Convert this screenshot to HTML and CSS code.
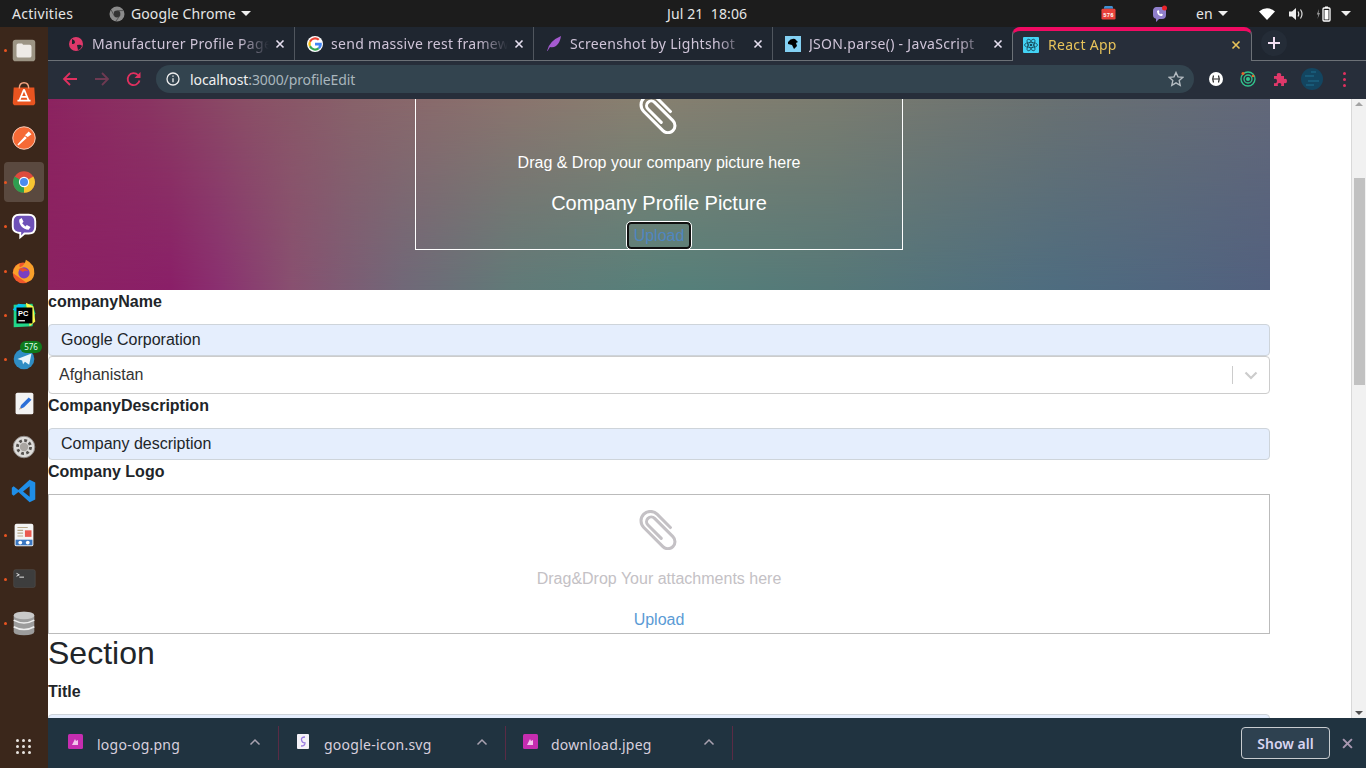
FILE: index.html
```html
<!DOCTYPE html>
<html lang="en">
<head>
<meta charset="UTF-8">
<meta name="viewport" content="width=device-width, initial-scale=1.0">
<title>React App</title>
<link rel="stylesheet" href="styles.css">
</head>
<body>
<!-- gnome top bar -->
<header class="topbar">
  <span class="activities">Activities</span>
  <span class="app-menu">
    <svg class="app-icon" viewBox="0 0 16 16"><circle cx="8" cy="8" r="7.500" fill="#8b8b8b"/><circle cx="8" cy="8" r="3.400" fill="#333"/><path d="M8 4.600h6M5 9.500L2.200 4M10.800 9.800L7 15" stroke="#555" stroke-width="1"/></svg>
    <span>Google Chrome</span><i class="caret"></i>
  </span>
  <span class="clock">Jul 21&nbsp;&nbsp;18:06</span>
  <div class="tray">
    <svg class="tray-cal" viewBox="0 0 16 16"><path d="M3 3a5 5 0 0 1 10 0z" fill="#3f8fd0"/><rect x="0.500" y="3" width="15" height="11.500" rx="1.500" fill="#e8413a"/><text x="8" y="11.500" text-anchor="middle" class="tray-cal-text">576</text></svg>
    <svg class="tray-viber" viewBox="0 0 18 18"><path d="M5 2h6a4 4 0 0 1 4 4v4a4 4 0 0 1-4 4H8l-3 3v-3.200A4 4 0 0 1 2 10V6a4 4 0 0 1 3-4z" fill="#8f7fcb"/><path d="M6 6c0 3 2 5 5 5l1-1.500-2-1-.8.700-1.400-1.400.7-.8-1-2z" fill="#fff"/><circle cx="13.500" cy="3" r="2.500" fill="#e8232a"/></svg>
    <span class="lang">en <i class="caret"></i></span>
    <svg class="tray-wifi" viewBox="0 0 16 12"><path d="M0 3.500Q8-3 16 3.500L8 12z" fill="#fff"/></svg>
    <svg class="tray-sound" viewBox="0 0 16 14"><path d="M1 4.500h3L8 1v12L4 9.500H1z" fill="#eee"/><path d="M10 4.500q1.500 2.500 0 5M12.500 2.500q3 4.500 0 9" stroke="#ddd" stroke-width="1.200" fill="none"/></svg>
    <svg class="tray-batt" viewBox="0 0 16 16"><path d="M3 3L0.800 8.500h1.500L1.500 13 4 7H2.600z" fill="#999"/><rect x="7" y="2" width="7" height="13" rx="1" fill="none" stroke="#fff" stroke-width="1.300"/><rect x="9" y="0.500" width="3" height="1.500" fill="#fff"/><rect x="8.500" y="4" width="4" height="9.500" fill="#fff"/></svg>
    <i class="caret"></i>
  </div>
</header>

<div class="desktop">
  <!-- ubuntu dock -->
  <nav class="dock">
    <div class="dock-item running"><svg viewBox="0 0 32 32"><rect x="4" y="5" width="24" height="23" rx="3" fill="#9c9484"/><path d="M8 11q0-2 2-2h4l1 1.500h7q2 0 2 2V22q0 2-2 2H10q-2 0-2-2z" fill="#eeeae6"/></svg></div>
    <div class="dock-item"><svg viewBox="0 0 32 32"><path d="M5 9h22l1 16q0 3-3 3H7q-3 0-3-3z" fill="#e95420"/><path d="M11 10q0-6 5-6t5 6" stroke="#f5a481" stroke-width="1.500" fill="none"/><path d="M16 11l-5 12M16 11l5 12M12 19h8M9 23h14" stroke="#fff" stroke-width="1.800" fill="none"/></svg></div>
    <div class="dock-item"><svg viewBox="0 0 32 32"><circle cx="16" cy="16" r="12" fill="#f56a36" stroke="#f9d3c2" stroke-width="1"/><path d="M9 23l8-9 2 2-9 8zM17 13l4-4 3 3-4 3z" fill="#fff"/></svg></div>
    <div class="dock-item running active"><svg viewBox="0 0 32 32"><circle cx="16" cy="16" r="11.500" fill="#dd4b3e"/><path d="M16 16L26 10.200A11.500 11.500 0 0 1 16 27.500z" fill="#f6c632"/><path d="M16 16L16 27.500A11.500 11.500 0 0 1 6 10.200z" fill="#2f9e50"/><circle cx="16" cy="16" r="5.500" fill="#fff"/><circle cx="16" cy="16" r="4.300" fill="#4a8cf0"/></svg></div>
    <div class="dock-item running"><svg viewBox="0 0 32 32"><path d="M11 3h10q8 0 8 8v6q0 8-8 8h-4l-6 5v-5.500Q3 23 3 17v-6q0-8 8-8z" fill="#fff"/><path d="M11 5h10q6 0 6 6v6q0 6-6 6h-5l-3 3v-3.500Q5 22 5 17v-6q0-6 6-6z" fill="#6e51b8"/><path d="M11 9c-1 5 4 11 10 11l2-3-4-2-1.500 1.500-3.500-3.500 1.500-1.500-2-4z" fill="#fff"/></svg></div>
    <div class="dock-item running"><svg viewBox="0 0 32 32"><circle cx="15" cy="18" r="11" fill="#f0582c"/><path d="M4 18Q6 9 12 8q-2 3 0 4 5-2 6-8 10 5 9 15-1 8-9 9z" fill="#f9a02b"/><circle cx="16" cy="18" r="6" fill="#7a3fc0"/><path d="M10 14q6-3 11 2-5-1-6 1z" fill="#e8502d"/></svg></div>
    <div class="dock-item running"><svg viewBox="0 0 32 32"><path d="M5 5l20-1 3 10-3 14-20 1z" fill="#21d789"/><path d="M18 3l8 4 2 16-6 5z" fill="#fcf84a"/><path d="M4 10l6-6 8 1-9 8z" fill="#07c3f2"/><rect x="8" y="8" width="17" height="17" fill="#000"/><text x="9.500" y="17" class="pc-text">PC</text><rect x="10" y="21.500" width="7" height="1.300" fill="#fff"/></svg></div>
    <div class="dock-item running"><svg viewBox="0 0 32 32"><circle cx="16" cy="16" r="11" fill="#2f8dc4"/><path d="M9 16l15-6-2.500 12-4.500-3-2 2.500-1-4z" fill="#e9f4fb"/></svg><span class="dock-badge">576</span></div>
    <div class="dock-item"><svg viewBox="0 0 32 32"><rect x="7" y="5" width="19" height="23" rx="2" fill="#f3f3f3"/><path d="M11 23l2-5 8-8 3 2.500-8 8z" fill="#2c6fd8"/><path d="M11 23l1-2.500 1.500 1.300z" fill="#e8b070"/></svg></div>
    <div class="dock-item"><svg viewBox="0 0 32 32"><circle cx="16" cy="16" r="11.500" fill="#dedcda" stroke="#8d8986" stroke-width="1"/><circle cx="16" cy="16" r="7" fill="none" stroke="#55524f" stroke-width="3" stroke-dasharray="3 2.500"/><circle cx="16" cy="16" r="4.500" fill="#aaa6a2"/></svg></div>
    <div class="dock-item"><svg viewBox="0 0 32 32"><path d="M22 4l6 3v18l-6 3-12-11-5 4-2-1.500v-7L5 11l5 4zM22 11l-7 5.500 7 5.500z" fill="#1f8ee8" fill-rule="evenodd"/></svg></div>
    <div class="dock-item running"><svg viewBox="0 0 32 32"><rect x="6" y="4" width="20" height="24" rx="2" fill="#f4f4f4"/><path d="M9 8h11M9 11h6M9 14h6M9 17h6" stroke="#b9a98a" stroke-width="1.200"/><rect x="17" y="11" width="7" height="7" fill="#ea5a50"/><rect x="7" y="21" width="18" height="6" fill="#3a77c2"/><circle cx="12" cy="24" r="2" fill="#fff"/><circle cx="20" cy="24" r="2" fill="#fff"/></svg></div>
    <div class="dock-item running"><svg viewBox="0 0 32 32"><rect x="5" y="6" width="23" height="19" rx="2" fill="#3d3d3d" stroke="#555" stroke-width="0.500"/><path d="M8 10l3 1.500-3 1.500M11 14h5" stroke="#eee" stroke-width="1" fill="none"/></svg></div>
    <div class="dock-item running"><svg viewBox="0 0 32 32"><path d="M5 8q0-4 11-4t11 4v17q0 4-11 4T5 25z" fill="#9c9c9c"/><ellipse cx="16" cy="8" rx="11" ry="4" fill="#c9c9c9"/><path d="M5 13q11 6 22 0M5 20q11 6 22 0" stroke="#eee" stroke-width="1.600" fill="none"/></svg></div>
    <div class="dock-apps"><i></i><i></i><i></i><i></i><i></i><i></i><i></i><i></i><i></i></div>
  </nav>

  <div class="browser">
    <!-- tab strip -->
    <div class="tabstrip">
      <div class="tab">
        <svg class="favicon" viewBox="0 0 16 16"><circle cx="8" cy="8" r="7" fill="#e0386a"/><path d="M4 3q3 1 3 3T4 8zM9 9q4-1 5 1-1 3-4 4z" fill="#1f2630"/></svg>
        <span class="tab-title">Manufacturer Profile Page</span>
        <svg class="tab-close" viewBox="0 0 10 10"><path d="M1.500 1.500l7 7M8.500 1.500l-7 7"/></svg>
      </div>
      <div class="tab">
        <svg class="favicon" viewBox="0 0 16 16"><circle cx="8" cy="8" r="8" fill="#fff"/><path d="M8 3.500a4.500 4.500 0 0 1 3 1.100l1.600-1.600A7 7 0 0 0 2 5l1.900 1.500A4.500 4.500 0 0 1 8 3.500z" fill="#ea4335"/><path d="M3.900 6.500L2 5a7 7 0 0 0 0 6l1.900-1.500a4.500 4.500 0 0 1 0-3z" fill="#fbbc05"/><path d="M3.900 9.500L2 11a7 7 0 0 0 10.600 2l-1.800-1.400A4.500 4.500 0 0 1 3.900 9.500z" fill="#34a853"/><path d="M14.700 6.700H8v2.700h3.800a3 3 0 0 1-1 2.200l1.800 1.400a7 7 0 0 0 2.100-6.300z" fill="#4285f4"/></svg>
        <span class="tab-title">send massive rest framework</span>
        <svg class="tab-close" viewBox="0 0 10 10"><path d="M1.500 1.500l7 7M8.500 1.500l-7 7"/></svg>
      </div>
      <div class="tab">
        <svg class="favicon" viewBox="0 0 16 16"><path d="M1 15Q3 5 15 0q-1 7-5 10-3 2-6 1l-2.500 4z" fill="#a45ad0"/></svg>
        <span class="tab-title">Screenshot by Lightshot</span>
        <svg class="tab-close" viewBox="0 0 10 10"><path d="M1.500 1.500l7 7M8.500 1.500l-7 7"/></svg>
      </div>
      <div class="tab">
        <svg class="favicon" viewBox="0 0 16 16"><rect width="16" height="16" fill="#83d0f2"/><path d="M3 6q3-4 7-3l3 3-2 1 1 3-3 3-2-4-4-1z" fill="#000"/></svg>
        <span class="tab-title">JSON.parse() - JavaScript</span>
        <svg class="tab-close" viewBox="0 0 10 10"><path d="M1.500 1.500l7 7M8.500 1.500l-7 7"/></svg>
      </div>
      <div class="tab tab-active">
        <svg class="favicon" viewBox="0 0 16 16"><rect width="16" height="16" rx="1" fill="#43d3f5"/><g fill="none" stroke="#164a5c" stroke-width="0.800"><ellipse cx="8" cy="8" rx="6.500" ry="2.600"/><ellipse cx="8" cy="8" rx="6.500" ry="2.600" transform="rotate(60 8 8)"/><ellipse cx="8" cy="8" rx="6.500" ry="2.600" transform="rotate(120 8 8)"/></g><circle cx="8" cy="8" r="1.300" fill="#164a5c"/></svg>
        <span class="tab-title">React App</span>
        <svg class="tab-close" viewBox="0 0 10 10"><path d="M1.500 1.500l7 7M8.500 1.500l-7 7"/></svg>
      </div>
      <div class="new-tab"><svg viewBox="0 0 14 14"><path d="M7 1v12M1 7h12"/></svg></div>
    </div>

    <!-- toolbar -->
    <div class="toolbar">
      <svg class="nav-btn" viewBox="0 0 16 16"><path d="M15 8H2M8 2L2 8l6 6"/></svg>
      <svg class="nav-btn nav-off" viewBox="0 0 16 16"><path d="M1 8h13M8 2l6 6-6 6"/></svg>
      <svg class="nav-btn" viewBox="0 0 16 16"><path d="M13.500 9.500A6 6 0 1 1 12 4"/><path class="nav-fill" d="M14.500 1v6h-6z"/></svg>
      <div class="omnibox">
        <svg class="info-icon" viewBox="0 0 14 14"><circle cx="7" cy="7" r="6"/><path d="M7 6.200v4M7 3.500v1.300"/></svg>
        <span class="url"><b>localhost</b>:3000/profileEdit</span>
        <svg class="star" viewBox="0 0 16 16"><path d="M8 1.500l2 4.400 4.700.5-3.500 3.200 1 4.700L8 11.900l-4.200 2.400 1-4.700L1.300 6.400 6 5.900z"/></svg>
      </div>
      <div class="extensions">
        <svg viewBox="0 0 16 16"><circle cx="8" cy="8" r="7" fill="#fff"/><path d="M5.500 4.500q-1.500 3.500 0 7M10.500 4.500q1.500 3.500 0 7M5.500 8h5" stroke="#222" stroke-width="1.200" fill="none"/></svg>
        <svg viewBox="0 0 16 16"><circle cx="8" cy="8" r="7" fill="none" stroke="#32c48d" stroke-width="1.300"/><circle cx="8" cy="8" r="4" fill="none" stroke="#32c48d" stroke-width="1.300"/><circle cx="8" cy="8" r="2" fill="#32c48d"/><circle cx="3" cy="2.500" r="1.500" fill="#e8662a"/><circle cx="13" cy="5" r="1.300" fill="#e8662a"/></svg>
        <svg viewBox="0 0 16 16"><path d="M2 5h3q-1-3 2-3t2 3h3v3q3-1 3 2t-3 2v3H9q1-3-1.500-3T6 15H2v-3q3 1 3-2T2 8z" fill="#e0386a"/></svg>
        <svg class="avatar" viewBox="0 0 22 22"><circle cx="11" cy="11" r="11" fill="#134560"/><path d="M4 8h9M7 13h11M10 4h5M5 17h8" stroke="#185a78" stroke-width="2"/></svg>
        <span class="menu-dots"><i></i><i></i><i></i></span>
      </div>
    </div>

    <div class="viewport">
      <!-- page is scrolled down a bit, as in the shot -->
      <main class="page">
        <div class="page-inner">
          <section class="hero">
            <div class="hero-box">
              <svg class="clip clip-white" viewBox="2.500 3 34 34"><path transform="rotate(-45 20 20)" d="M28 25V9a8 8 0 0 0-16 0v23a6 6 0 0 0 12 0V10a4 4 0 0 0-8 0v16"/></svg>
              <p class="hero-hint">Drag &amp; Drop your company picture here</p>
              <p class="hero-title">Company Profile Picture</p>
              <button class="hero-upload">Upload</button>
            </div>
          </section>
          <label class="field-label">companyName</label>
          <div class="text-input">Google Corporation</div>
          <div class="select-box">
            <span>Afghanistan</span>
            <span class="select-arrow"><svg viewBox="0 0 20 20"><path d="M4.500 7.500L10 13l5.500-5.500"/></svg></span>
          </div>
          <label class="field-label">CompanyDescription</label>
          <div class="text-input">Company description</div>
          <label class="field-label">Company Logo</label>
          <div class="drop-box">
            <svg class="clip clip-grey" viewBox="2.500 3 34 34"><path transform="rotate(-45 20 20)" d="M28 25V9a8 8 0 0 0-16 0v23a6 6 0 0 0 12 0V10a4 4 0 0 0-8 0v16"/></svg>
            <p class="drop-hint">Drag&amp;Drop Your attachments here</p>
            <a class="drop-upload">Upload</a>
          </div>
          <h2 class="section-title">Section</h2>
          <label class="field-label">Title</label>
          <div class="text-input"></div>
        </div>
        <div class="scrollbar">
          <i class="arrow-up"></i>
          <div class="thumb"></div>
          <i class="arrow-down"></i>
        </div>
      </main>
    </div>

    <!-- downloads shelf -->
    <footer class="downloads">
      <div class="dl-item">
        <svg class="dl-icon" viewBox="0 0 15 15"><rect width="15" height="15" rx="1.500" fill="#c62db0"/><path d="M4 11l3-6 1 2 2-1v5z" fill="#f3c4ec"/></svg>
        <span class="dl-name">logo-og.png</span>
        <svg class="dl-chevron" viewBox="0 0 12 8"><path d="M1.500 6.500L6 2l4.500 4.500"/></svg>
      </div>
      <div class="dl-item">
        <svg class="dl-icon dl-icon-svg" viewBox="0 0 12 15"><rect width="12" height="15" rx="1" fill="#f4f2f8"/><path d="M8 3Q4 3 4.500 6T8 9q0 3-4 3" stroke="#9a7be0" stroke-width="1.300" fill="none"/></svg>
        <span class="dl-name">google-icon.svg</span>
        <svg class="dl-chevron" viewBox="0 0 12 8"><path d="M1.500 6.500L6 2l4.500 4.500"/></svg>
      </div>
      <div class="dl-item">
        <svg class="dl-icon" viewBox="0 0 15 15"><rect width="15" height="15" rx="1.500" fill="#c62db0"/><path d="M4 11l3-6 1 2 2-1v5z" fill="#f3c4ec"/></svg>
        <span class="dl-name">download.jpeg</span>
        <svg class="dl-chevron" viewBox="0 0 12 8"><path d="M1.500 6.500L6 2l4.500 4.500"/></svg>
      </div>
      <button class="show-all">Show all</button>
      <svg class="dl-close" viewBox="0 0 10 10"><path d="M1 1l8 8M9 1l-8 8"/></svg>
    </footer>
  </div>
</div>
</body>
</html>
```
FILE: styles.css
```css
* {
  box-sizing: border-box;
}
html, body {
  height: 100%;
}
body {
  margin: 0;
  overflow: hidden;
  display: flex;
  flex-direction: column;
  font-family: "Liberation Sans", Arial, sans-serif;
  font-size: 16px;
  color: #212529;
  background: #fff;
}
svg {
  display: block;
  flex: none;
}

/* top bar */
.topbar {
  height: 27px;
  flex: none;
  display: flex;
  align-items: center;
  background: #1c1c1c;
  color: #e6e6e6;
  font-family: "Noto Sans", sans-serif;
  font-size: 14px;
  letter-spacing: 0.1px;
}
.activities {
  margin-left: 12px;
  width: 97px;
  letter-spacing: 0.3px;
}
.app-menu {
  display: flex;
  align-items: center;
  width: 558px;
  white-space: nowrap;
}
.app-icon {
  width: 16px;
  height: 16px;
  margin-right: 6px;
}
.caret {
  display: inline-block;
  width: 0;
  height: 0;
  margin-left: 5px;
  border-left: 5px solid transparent;
  border-right: 5px solid transparent;
  border-top: 5px solid #eee;
}
.clock {
  width: 81px;
  white-space: nowrap;
}
.tray {
  margin-left: auto;
  display: flex;
  align-items: center;
  padding-right: 15px;
}
.tray > .caret {
  margin-left: 9px;
}
.tray-cal {
  width: 15px;
  height: 15px;
}
.tray-cal-text {
  font: bold 6px "Liberation Mono", monospace;
  fill: #fff;
}
.tray-viber {
  width: 18px;
  height: 18px;
  margin-left: 35px;
}
.lang {
  margin-left: 27px;
  display: flex;
  align-items: center;
  width: 63px;
}
.tray-wifi {
  width: 16px;
  height: 12px;
}
.tray-sound {
  width: 16px;
  height: 14px;
  margin-left: 13px;
}
.tray-batt {
  width: 16px;
  height: 16px;
  margin-left: 12px;
}

/* dock + browser */
.desktop {
  flex: 1;
  min-height: 0;
  display: flex;
}
.dock {
  width: 48px;
  flex: none;
  display: flex;
  flex-direction: column;
  padding-top: 1px;
  background: #3b271b;
}
.dock-item {
  position: relative;
  height: 44.100px;
  flex: none;
  display: flex;
  align-items: center;
  justify-content: center;
}
.dock-item svg {
  width: 30px;
  height: 30px;
}
.dock-item.active svg {
  width: 40px;
  height: 40px;
  padding: 5px;
  border-radius: 4px;
  background: rgba(255, 255, 255, 0.16);
}
.running::before {
  content: "";
  position: absolute;
  left: 4px;
  top: 50%;
  width: 3px;
  height: 3px;
  margin-top: -1px;
  border-radius: 50%;
  background: #e95420;
}
.dock-badge {
  position: absolute;
  left: 20px;
  top: 4px;
  width: 22px;
  height: 12px;
  border-radius: 6px;
  background: #0f7a1c;
  color: #dfe;
  font: 8px/12px "Noto Sans", sans-serif;
  text-align: center;
}
.pc-text {
  font: bold 8px "Liberation Sans", sans-serif;
  fill: #fff;
}
.dock-apps {
  margin-top: auto;
  margin-bottom: 14px;
  margin-left: 16px;
  width: 16px;
  display: grid;
  grid-template-columns: repeat(3, 3px);
  gap: 3px;
}
.dock-apps i {
  width: 3px;
  height: 3px;
  border-radius: 50%;
  background: #e8e4e0;
}
.browser {
  flex: 1;
  min-width: 0;
  display: flex;
  flex-direction: column;
}

/* tabs */
.tabstrip {
  height: 34px;
  flex: none;
  display: flex;
  padding-left: 8px;
  background: #1f2630;
  border-bottom: 1px solid #6c7177;
  font-family: "Noto Sans", sans-serif;
  font-size: 14px;
  letter-spacing: 0.3px;
}
.tab {
  width: 239px;
  height: 33px;
  display: flex;
  align-items: center;
  padding: 0 9px 0 12px;
  border-right: 1px solid #50565e;
  color: #cfc4d8;
}
.tab:nth-child(4) {
  border-right: none;
}
.tab-active {
  position: relative;
  width: 240px;
  height: 34px;
  padding: 0 10px 3px 10px;
  border: 1px solid #6c7177;
  border-top: 4px solid #f00b62;
  border-bottom: none;
  border-radius: 8px 8px 0 0;
  background: #272e3a;
  color: #e8c35a;
}
.favicon {
  width: 16px;
  height: 16px;
  margin-right: 8px;
}
.tab-active .favicon {
  margin-right: 9px;
}
.tab-title {
  flex: 1;
  min-width: 0;
  overflow: hidden;
  white-space: nowrap;
  -webkit-mask-image: linear-gradient(to left, transparent 0, #000 30px);
  mask-image: linear-gradient(to left, transparent 0, #000 30px);
}
.tab-close {
  width: 10px;
  height: 10px;
  margin-left: 6px;
}
.tab-close path {
  stroke: #e6dff0;
  stroke-width: 1.600;
  fill: none;
}
.tab-active .tab-close path {
  stroke: #e8c35a;
}
.new-tab {
  width: 26px;
  height: 26px;
  margin: 3px 0 0 9px;
  display: flex;
  align-items: center;
  justify-content: center;
  border-radius: 50%;
  background: #242c37;
}
.new-tab svg {
  width: 14px;
  height: 14px;
}
.new-tab path {
  stroke: #f2dff2;
  stroke-width: 2;
}

/* toolbar */
.toolbar {
  height: 38px;
  flex: none;
  display: flex;
  align-items: center;
  padding: 0 14px 2px;
  background: #272e3a;
  font-family: "Noto Sans", sans-serif;
}
.nav-btn {
  width: 16px;
  height: 16px;
  margin-right: 16px;
}
.nav-btn path {
  fill: none;
  stroke: #e0305f;
  stroke-width: 1.800;
}
.nav-btn .nav-fill {
  fill: #e0305f;
  stroke: none;
}
.nav-btn.nav-off path {
  stroke: #6e3a52;
}
.omnibox {
  width: 1038px;
  height: 28px;
  margin-left: -2px;
  display: flex;
  align-items: center;
  padding: 0 10px 0 10px;
  border-radius: 14px;
  background: #33444f;
  font-size: 14px;
  letter-spacing: -0.1px;
  color: #a9b6bd;
}
.info-icon {
  width: 14px;
  height: 14px;
  margin-right: 10px;
}
.info-icon circle, .info-icon path {
  fill: none;
  stroke: #eee;
  stroke-width: 1.300;
}
.url b {
  font-weight: 400;
  color: #f0f0f0;
}
.star {
  width: 16px;
  height: 16px;
  margin-left: auto;
}
.star path {
  fill: none;
  stroke: #b5bcc2;
  stroke-width: 1.400;
}
.extensions {
  display: flex;
  align-items: center;
  margin-left: 14px;
}
.extensions svg {
  width: 16px;
  height: 16px;
  margin-right: 16px;
}
.extensions .avatar {
  width: 22px;
  height: 22px;
  margin: 0 20px 0 -3px;
}
.menu-dots {
  display: flex;
  flex-direction: column;
  gap: 3px;
}
.menu-dots i {
  width: 3px;
  height: 3px;
  border-radius: 50%;
  background: #e0305f;
}

/* page */
.viewport {
  flex: 1;
  min-height: 0;
  overflow: hidden;
}
.page {
  height: 100%;
  display: flex;
}
.page-inner {
  width: 1222px;
  margin-top: -61px;
  flex: none;
}
/* top row of the colours is the background, bottom row fades in over it */
.hero {
  position: relative;
  height: 252px;
  padding-top: 40px;
  color: #fff;
  background: linear-gradient(90deg, #8c2360 0, #8a3462 8%, #8a4e66 16%, #88626a 25%, #8a746e 38%, #888070 48%, #7a7c70 64%, #687072 83%, #62687a 100%);
}
.hero::before {
  content: "";
  position: absolute;
  inset: 0;
  background: linear-gradient(90deg, #8c2262 0, #8a1f68 10%, #8a3070 14%, #885070 20%, #706878 29%, #607a78 38%, #55807a 51%, #557878 64%, #4e6c80 83%, #52607e 100%);
  -webkit-mask-image: linear-gradient(to bottom, transparent 61px, #000 252px);
  mask-image: linear-gradient(to bottom, transparent 61px, #000 252px);
}
.hero-box {
  position: relative;
  width: 488px;
  height: 172px;
  margin: 0 auto;
  padding-top: 15px;
  border: 1px solid #fff;
  display: flex;
  flex-direction: column;
  align-items: center;
}
.clip {
  width: 40px;
  height: 40px;
}
.clip path {
  fill: none;
  stroke-width: 2.600;
  stroke-linecap: round;
}
.clip-white path {
  stroke: #fff;
}
.clip-grey path {
  stroke: #c4c1c5;
}
.hero-hint {
  margin: 17px 0 15px;
  line-height: 24px;
}
.hero-title {
  margin: -2px 0 4px;
  font-size: 20px;
  line-height: 30px;
}
.hero-upload {
  width: 64px;
  height: 29px;
  padding: 1px 0 0;
  border: 2px solid #111;
  border-radius: 4px;
  outline: 1px solid #fff;
  background: transparent;
  color: #4f86c0;
  font: 16px "Liberation Sans", sans-serif;
}
.field-label {
  display: block;
  height: 24px;
  margin-bottom: 10px;
  font-weight: 700;
  line-height: 24px;
}
.text-input {
  height: 32px;
  padding: 0 12px;
  border: 1px solid #ced4da;
  border-radius: 4px;
  background: #e5eefd;
  line-height: 30px;
}
.select-box {
  height: 38px;
  display: flex;
  align-items: center;
  justify-content: space-between;
  padding-left: 10px;
  border: 1px solid #ccc;
  border-radius: 4px;
  color: #333;
}
.select-arrow {
  height: 18px;
  width: 37px;
  display: flex;
  align-items: center;
  justify-content: center;
  border-left: 1px solid #ccc;
}
.select-arrow svg {
  width: 20px;
  height: 20px;
}
.select-arrow path {
  fill: none;
  stroke: #ccc;
  stroke-width: 2.200;
}
.drop-box {
  height: 140px;
  padding-top: 15px;
  border: 1px solid #bbb;
  display: flex;
  flex-direction: column;
  align-items: center;
}
.drop-hint {
  margin: 17px 0 17px;
  line-height: 24px;
  color: #c4c1c5;
}
.drop-upload {
  line-height: 24px;
  color: #5b9bd5;
}
.section-title {
  margin: 0 0 8px;
  font-size: 32px;
  font-weight: 400;
  line-height: 38px;
}

/* scrollbar */
.scrollbar {
  position: relative;
  width: 15px;
  margin-left: auto;
  background: #f1f1f1;
  border-left: 1px solid #d8d8d8;
}
.thumb {
  position: absolute;
  left: 2px;
  top: 79px;
  width: 11px;
  height: 207px;
  background: #c1c1c1;
}
.arrow-up, .arrow-down {
  position: absolute;
  left: 3px;
  width: 0;
  height: 0;
  border-left: 4px solid transparent;
  border-right: 4px solid transparent;
}
.arrow-up {
  top: 3px;
  border-bottom: 4px solid #a3a3a3;
}
.arrow-down {
  bottom: 3px;
  border-top: 4px solid #505050;
}

/* downloads */
.downloads {
  height: 50px;
  flex: none;
  display: flex;
  align-items: center;
  background: #203340;
  font-family: "Noto Sans", sans-serif;
  font-size: 14px;
  letter-spacing: 0.25px;
  color: #d8d0de;
}
.dl-item {
  width: 227px;
  height: 34px;
  display: flex;
  align-items: center;
  padding: 0 17px 0 17px;
  border-right: 1px solid #5a2b45;
}
.dl-item:first-child {
  width: 231px;
  padding-left: 20px;
}
.dl-icon {
  width: 15px;
  height: 15px;
  margin: -4px 13px 0 0;
}
.dl-item:first-child .dl-icon {
  margin-right: 14px;
}
.dl-icon-svg {
  width: 12px;
  margin: -4px 15px 0 1px;
}
.dl-name {
  flex: 1;
  margin-top: 3px;
}
.dl-chevron {
  width: 12px;
  height: 8px;
  margin-top: -3px;
}
.dl-chevron path {
  fill: none;
  stroke: #a9a2b0;
  stroke-width: 1.500;
}
.show-all {
  width: 89px;
  height: 32px;
  margin-left: auto;
  padding: 0;
  border: 1px solid #c8ccd0;
  border-radius: 4px;
  background: #2e4150;
  color: #d8d4f0;
  font: 600 14px "Noto Sans", sans-serif;
}
.dl-close {
  width: 11px;
  height: 11px;
  margin: 0 13px 0 12px;
}
.dl-close path {
  stroke: #a898b0;
  stroke-width: 1.800;
}
```
